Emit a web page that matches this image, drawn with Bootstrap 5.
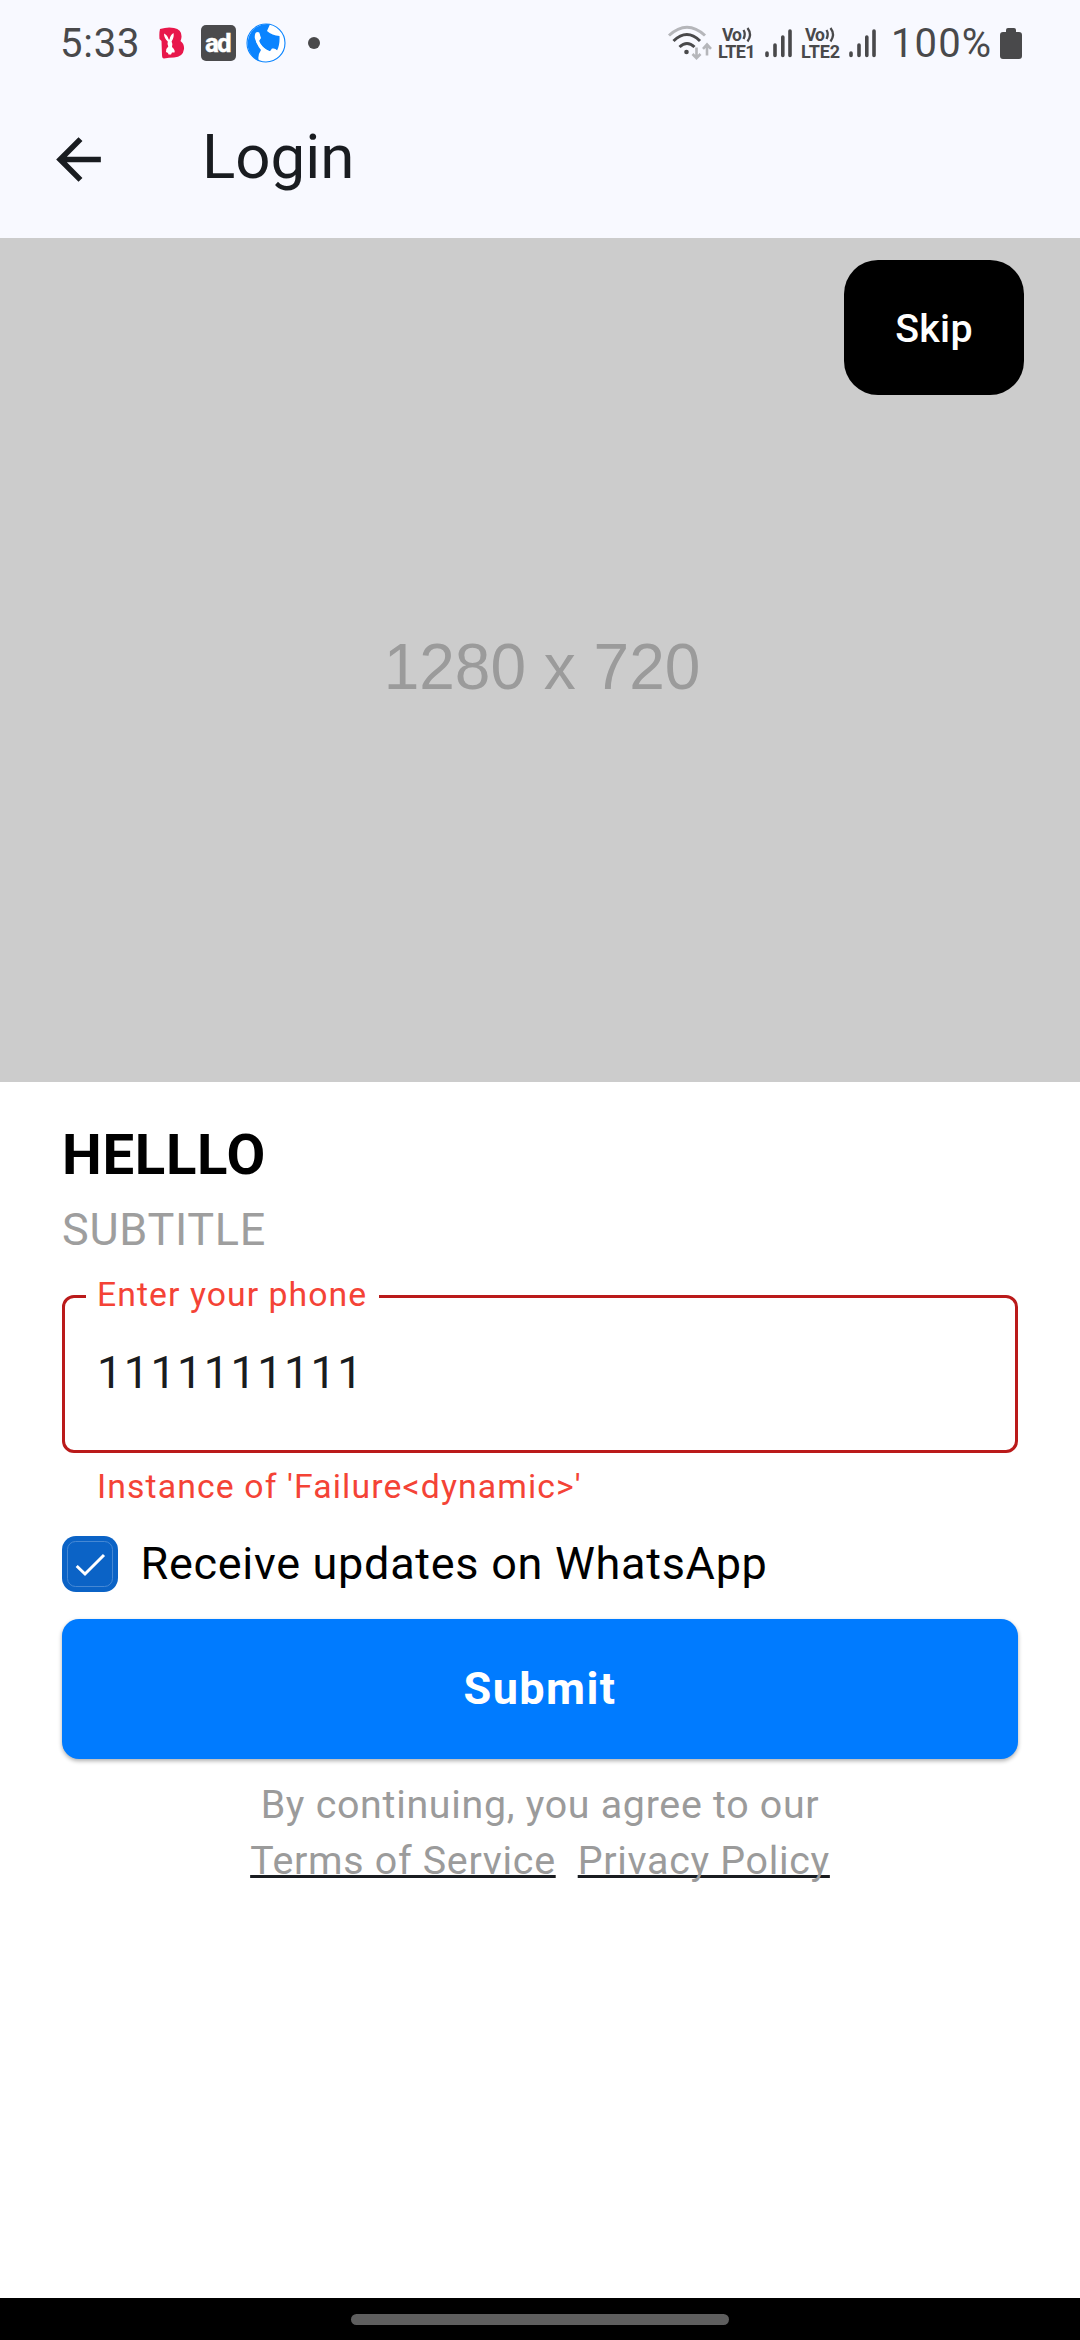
<!DOCTYPE html>
<html lang="en">
<head>
<meta charset="utf-8">
<meta name="viewport" content="width=device-width, initial-scale=1">
<title>Login</title>
<link href="https://cdn.jsdelivr.net/npm/bootstrap@5.3.0/dist/css/bootstrap.min.css" rel="stylesheet">
<style>
  body { font-family: Roboto, "Noto Sans", sans-serif; color: #191c20; background: #fff; font-size: 45px; line-height: 1.333; }
  .screen { width: 1080px; height: 2340px; overflow: hidden; }
  .top-area { background: #f8f9ff; height: 238px; }
  .status { height: 80px; padding: 6px 58px 0 60px; color: #49494b; font-size: 40px; line-height: 74px; }
  .status svg, .appbar svg { display: block; flex: none; }
  .clock { width: 99px; padding-top: 1px; letter-spacing: .8px; }
  .pct { letter-spacing: 1.1px; width: 109px; padding-top: 1px; }
  .appbar { height: 158px; padding-left: 45px; }
  .appbar h1 { font-size: 61.875px; font-weight: 400; margin: 0 0 4px 90px; line-height: 78px; }
  .banner { height: 844px; background: #ccc; color: #9b9b9b; }
  .banner-text { font: 64px/74px "Liberation Sans", Arial, sans-serif; padding-left: 4px; padding-top: 13px; }
  .btn-skip { top: 22px; right: 56px; width: 180px; height: 135px; border-radius: 34px; background: #000; color: #fff; font-size: 39.375px; font-weight: 500; letter-spacing: .28px; }
  .btn-skip span { display: block; padding-top: 2px; }
  .form-area { padding: 36px 62px 0; }
  .title { font-size: 56.25px; line-height: 75px; font-weight: 700; letter-spacing: .703px; color: #000; margin: 0; }
  .subtitle { font-size: 45px; line-height: 60px; letter-spacing: .703px; color: #9e9e9e; margin: 7px 0 0; }
  .phone-box { margin-top: 35px; }
  .phone-box .form-control { height: 158px; border: 3px solid #ba1a1a; border-radius: 12px; padding: 0 32px 3px; font-size: 45px; letter-spacing: 1.406px; color: #191c20; background: #fff; }
  .phone-box label { top: -22px; left: 24px; padding: 0 12px 0 11px; background: #fff; color: #f44336; font-size: 33.75px; line-height: 44px; letter-spacing: 1.055px; }
  .err { color: #f44336; font-size: 33.75px; line-height: 45px; letter-spacing: 1.125px; margin: 11px 0 0 35px; }
  .consent { margin-top: 27px; height: 56px; gap: 22.500px; color: #000; letter-spacing: .703px; }
  .consent svg { display: block; }
  .btn-submit { margin-top: 27px; height: 140px; border-radius: 17px; background: #007bff; color: #fff; font-size: 45px; font-weight: 700; letter-spacing: 1.406px; box-shadow: 0 2px 4px rgba(0,0,0,.32); }
  .legal { margin-top: 18px; font-size: 39.375px; line-height: 56px; letter-spacing: .703px; color: #9b9b9b; }
  .legal a { color: #9b9b9b; text-decoration: underline 3px #191c20; text-underline-offset: 1px; text-decoration-skip-ink: none; }
  .legal-links { gap: 22px; }
  .navbar-gesture { height: 42px; background: #000; padding-top: 16px; }
  .pill { width: 378px; height: 11px; background: #5e5e5e; border-radius: 6px; }
</style>
</head>
<body>
<div class="screen d-flex flex-column">
  <header class="top-area">
    <div class="status d-flex align-items-center">
      <span class="clock">5:33</span>
      <svg width="26" height="32" viewBox="0 0 26 32"><path d="M1 2Q9-.5 15 1Q23 2.500 22.500 10Q22.400 12 21.500 14Q25.500 17 25 22Q24 30 15 30.500Q10 30.500 5 31.500Q3 31.500 3 28L2.500 14L.5 12Q0 6 1 2Z" fill="#e8174b"/><path d="M5 6.500Q8.500 8 9.700 12.500L10.600 12.500Q11 8 14.500 6Q15.500 10 12.600 14.500Q14 17 13 20Q16.500 23 15.500 25.500L13 25.500L12 27.500H9.500L9 26L7 25Q6.700 21.500 9.300 19.500Q8 17 8.800 14.500Q5 11 5 6.500Z" fill="#fff"/></svg>
      <svg width="35" height="36" viewBox="0 0 35 36" style="margin-left:16px"><rect y="0" width="35" height="36" rx="5" fill="#4b4b4d"/><text x="17.300" y="27.300" text-anchor="middle" font-family="Roboto" font-weight="700" font-size="26" fill="#fff" stroke="#fff" stroke-width=".4" textLength="26.500">ad</text></svg>
      <svg width="40" height="40" viewBox="0 0 40 40" style="margin-left:10px"><circle cx="20" cy="20" r="19" fill="#fff" stroke="#0a84ff" stroke-width="1.100"/><path d="M24 1.200A19.500 19.500 0 0 0 13 38.200Q11 33 15 27Q9 20 9.500 12L13 9L15 15L13 18Q15 25 24 28.500L28 25.500L31 27.500Q34 22 33.500 13Q26 12.500 21 8Z" fill="#0a84ff"/><path d="M9.500 10Q12 7.500 13.500 11L14.200 15.500Q12 17 14 20Q18 26.500 24 28.200L26 25.500Q30 25 31.500 28Q29 32 23 30Q11 25 8.800 15Q8.500 12 9.500 10Z" fill="#fff"/></svg>
      <svg width="12" height="12" viewBox="0 0 12 12" style="margin-left:22px"><circle cx="6" cy="6" r="6" fill="#49494b"/></svg>

      <svg class="ms-auto" width="46" height="36" viewBox="0 0 46 36" fill="none" stroke-width="3"><path d="M2 10.500Q20-6 38 10.500" stroke="#b5b6ba"/><path d="M6.500 16Q20 3 33 16" stroke="#49494b"/><path d="M12.500 22Q20 15 27.500 22" stroke="#49494b"/><circle cx="19.500" cy="27" r="2.300" fill="#49494b"/><path d="M29.500 22.500V33M25.500 29L29.500 33.200L33.500 29M40 30.500V20M36 23.800L40 19.500L44 23.800" stroke="#b5b6ba" stroke-width="2.600"/></svg>
      <svg width="38" height="36" viewBox="0 0 38 36" style="margin-left:5px" font-family="Roboto" font-weight="700" fill="#49494b"><text x="4" y="15.500" font-size="17.500" textLength="20">Vo</text><path d="M25.500 5Q28 9 25.500 14M29.500 3Q34.500 9.500 29.500 16.500" fill="none" stroke="#49494b" stroke-width="2.300"/><text x="0" y="33" font-size="18" textLength="37.500">LTE1</text></svg>
      <svg width="27" height="30" viewBox="0 0 27 30" style="margin-left:9px" stroke="#49494b" stroke-width="3.600" stroke-linecap="round"><path d="M2 25V27.500M10 17V27.500M17.800 9V27.500M25 3V27.500"/></svg>
      <svg width="40" height="36" viewBox="0 0 40 36" style="margin-left:9px" font-family="Roboto" font-weight="700" fill="#49494b"><text x="4" y="15.500" font-size="17.500" textLength="20">Vo</text><path d="M25.500 5Q28 9 25.500 14M29.500 3Q34.500 9.500 29.500 16.500" fill="none" stroke="#49494b" stroke-width="2.300"/><text x="0" y="33" font-size="18" textLength="39">LTE2</text></svg>
      <svg width="27" height="30" viewBox="0 0 27 30" style="margin-left:8px" stroke="#49494b" stroke-width="3.600" stroke-linecap="round"><path d="M2 25V27.500M10 17V27.500M17.800 9V27.500M25 3V27.500"/></svg>
      <span class="pct text-nowrap" style="margin-left:15px">100%</span>
      <svg width="22" height="31" viewBox="0 0 22 31"><path d="M6 2Q6 0 8 0H14Q16 0 16 2V4H19Q22 4 22 7V28Q22 31 19 31H3Q0 31 0 28V7Q0 4 3 4H6Z" fill="#49494b"/></svg>
    </div>
    <div class="appbar d-flex align-items-center">
      <svg width="67" height="67" viewBox="0 0 24 24" fill="#191c20"><path d="M20 11H7.830l5.590-5.590L12 4l-8 8 8 8 1.410-1.410L7.830 13H20v-2z"/></svg>
      <h1>Login</h1>
    </div>
  </header>

  <section class="banner position-relative d-flex align-items-center justify-content-center">
    <span class="banner-text">1280 x 720</span>
    <button type="button" class="btn btn-skip position-absolute border-0 p-0"><span>Skip</span></button>
  </section>

  <main class="form-area d-flex flex-column flex-grow-1">
    <h2 class="title">HELLLO</h2>
    <p class="subtitle">SUBTITLE</p>
    <div class="phone-box position-relative">
      <input id="phone" class="form-control shadow-none" type="tel" value="1111111111">
      <label for="phone" class="position-absolute">Enter your phone</label>
    </div>
    <div class="err">Instance of 'Failure&lt;dynamic&gt;'</div>
    <div class="consent d-flex align-items-center">
      <svg width="56" height="56" viewBox="0 0 56 56" role="checkbox" aria-checked="true"><rect width="56" height="56" rx="14" fill="#0b63c6"/><rect x="5.500" y="5.500" width="45" height="45" rx="8" fill="none" stroke="#4c8cd6" stroke-width=".9"/><path d="M14.700 30L23 38L42 19" fill="none" stroke="#fff" stroke-width="3"/></svg>
      <span>Receive updates on WhatsApp</span>
    </div>
    <button type="button" class="btn btn-submit border-0 p-0 w-100">Submit</button>
    <div class="legal text-center">
      <div>By continuing, you agree to our</div>
      <div class="legal-links d-flex justify-content-center"><a href="#">Terms of Service</a><a href="#">Privacy Policy</a></div>
    </div>
  </main>

  <footer class="navbar-gesture d-flex justify-content-center"><div class="pill"></div></footer>
</div>
<script src="https://cdn.jsdelivr.net/npm/bootstrap@5.3.0/dist/js/bootstrap.bundle.min.js"></script>
</body>
</html>
